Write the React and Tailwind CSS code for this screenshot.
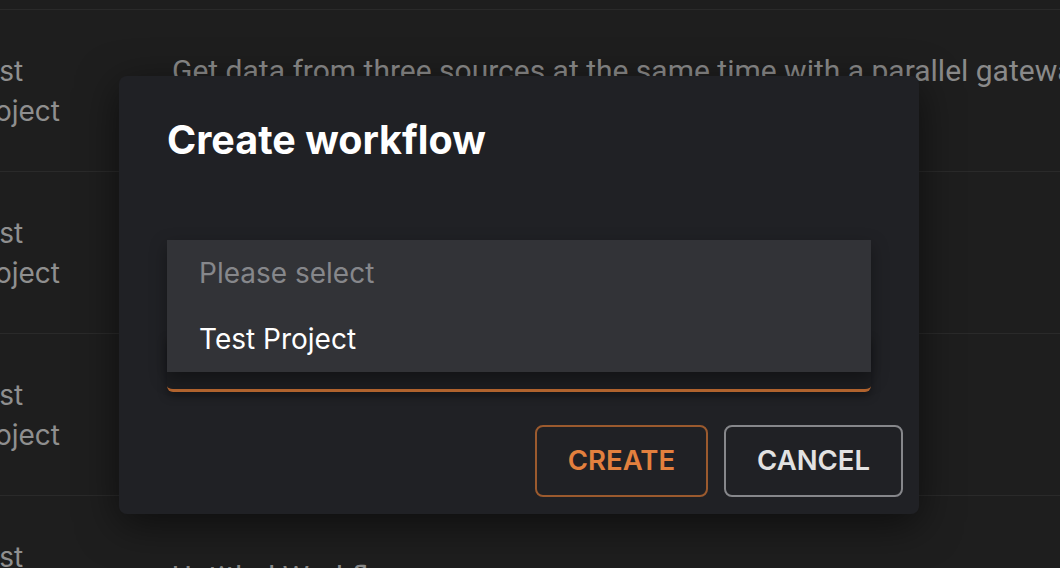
import React from 'react';

const rows = [
  { project: 'Test Project', description: 'Get data from three sources at the same time with a parallel gateway and merge the results' },
  { project: 'Test Project', description: '' },
  { project: 'Test Project', description: '' },
  { project: 'Test Project', description: 'Untitled Workflow' },
];

function App() {
  return (
    <div className="relative h-[568px] w-[1060px] overflow-hidden bg-[#1e1e1e] font-['Inter',sans-serif]">
      {/* list behind the dialog */}
      <div className="h-[9px]" />
      {rows.map((row, i) => (
        <div key={i} className="flex h-[162px] items-center border-t border-[#2a2a2a]">
          <div className="ml-[-33px] w-[205px] shrink-0 text-[28px] leading-[40px] text-[#8f8f8f]">
            {row.project.split(' ').map((w) => (
              <div key={w}>{w}</div>
            ))}
          </div>
          <div className="w-[930px] shrink-0 font-['Roboto',sans-serif] text-[30px] leading-[40px] text-[#8a8a8a]">
            {row.description}
          </div>
        </div>
      ))}

      {/* dialog */}
      <div className="absolute left-[119px] top-[76px] flex w-[800px] flex-col rounded-lg bg-[#202125] shadow-[0_10px_40px_rgba(0,0,0,0.55)]">
        <h2 className="px-[48px] pt-[40px] text-[39.5px] font-bold leading-[48px] text-white">Create workflow</h2>

        <div className="relative mx-[48px] mt-[172px] h-[56px] rounded-b-md border-b-[3px] border-[#b4652f] bg-[#1c1d20] shadow-[0_4px_10px_rgba(0,0,0,0.35)]">
          <div className="absolute bottom-[17px] left-0 right-0 bg-[#323337] shadow-[0_6px_16px_rgba(0,0,0,0.35)]">
            <div className="flex h-[66px] items-center px-[32px] text-[28px] text-[#86878b]">Please select</div>
            <div className="flex h-[66px] items-center px-[32px] text-[28px] text-white">Test Project</div>
          </div>
        </div>

        <div className="mt-[33px] flex justify-end gap-[16px] pb-[17px] pr-[16px]">
          <button className="h-[72px] rounded-lg border-2 border-[#9b5a2e] px-[31px] text-[27.5px] font-semibold text-[#e3803e]">
            CREATE
          </button>
          <button className="h-[72px] rounded-lg border-2 border-[#86878b] px-[31px] text-[27.5px] font-semibold text-[#e2e2e2]">
            CANCEL
          </button>
        </div>
      </div>
    </div>
  );
}

export default App;
